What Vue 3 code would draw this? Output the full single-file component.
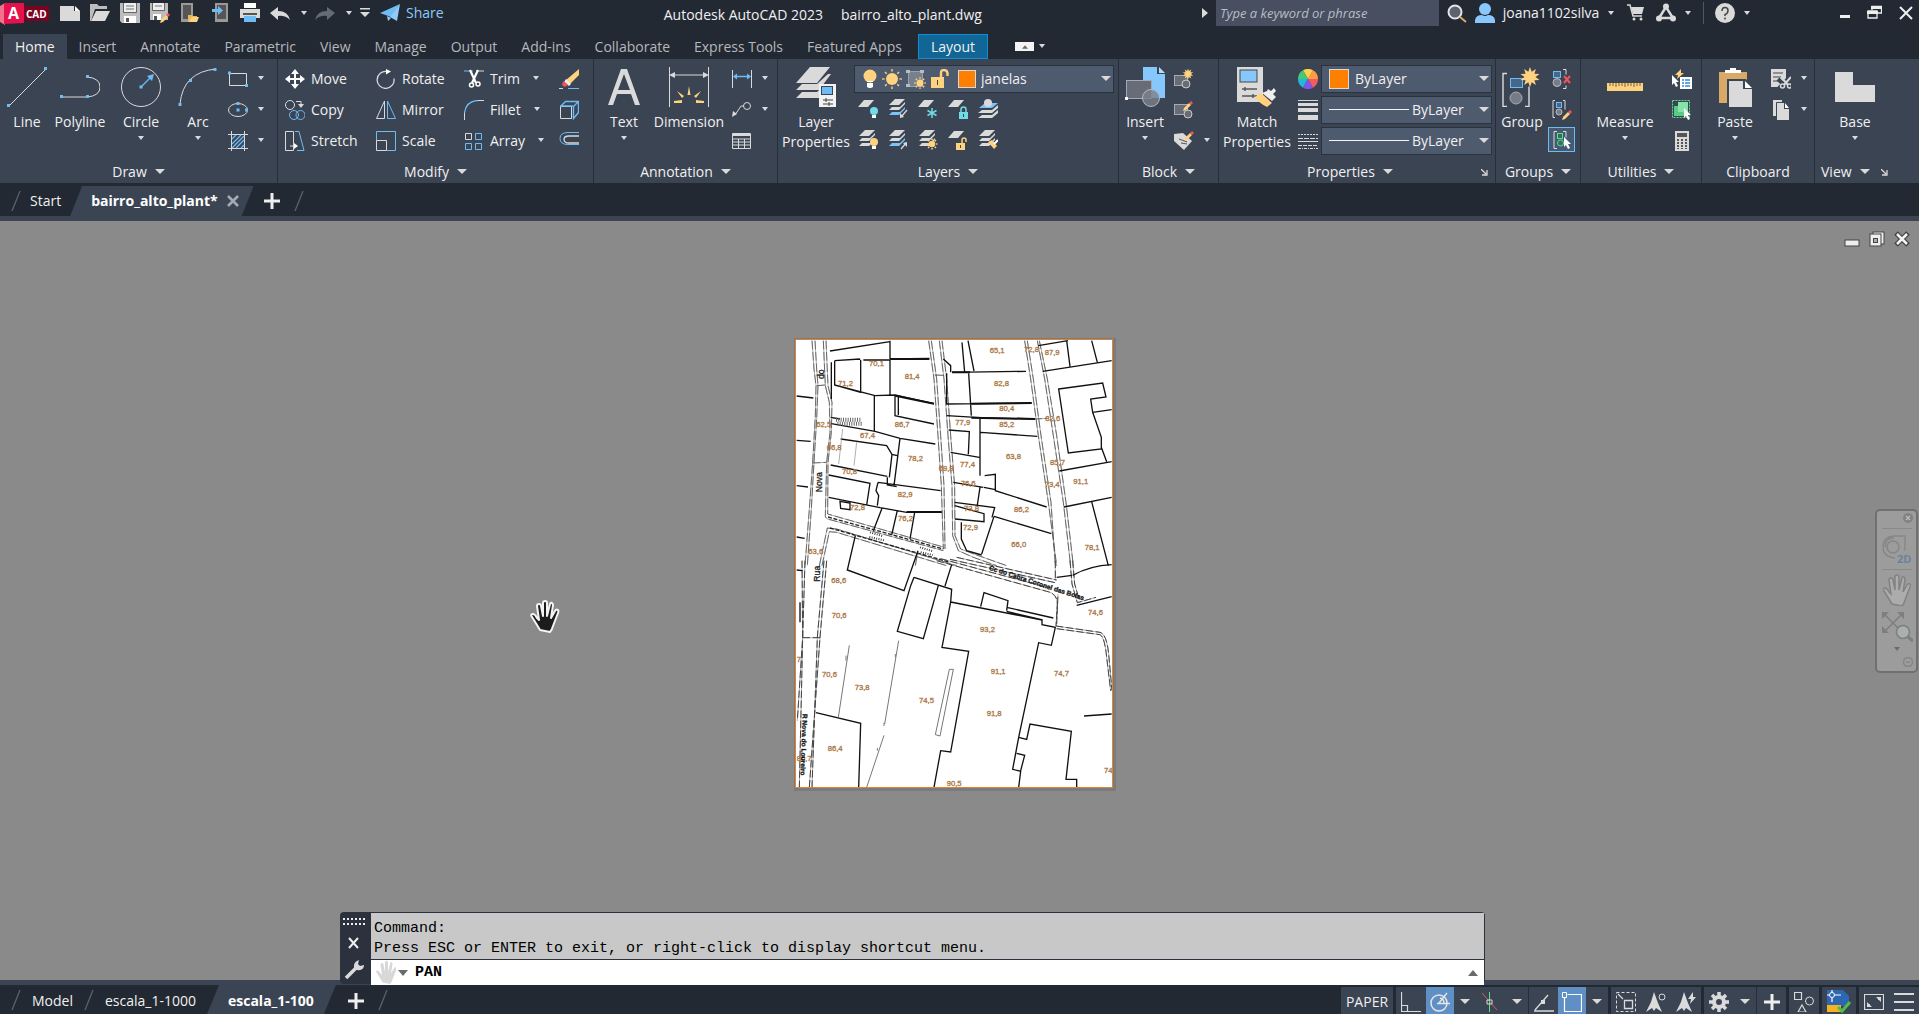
<script setup>
import { h, ref } from 'vue'

const L = '#dadada'
const B = '#6fbcf5'
const Y = '#ffd27f'
const C = '#6fdbe6'

const line = (d, c = L, w = 1) => `<path d="${d}" stroke="${c}" stroke-width="${w}" fill="none"/>`
const fill = (d, c = L) => `<path d="${d}" fill="${c}"/>`
const dot = (x, y, s = 3, c = B) => `<rect x="${x - s / 2}" y="${y - s / 2}" width="${s}" height="${s}" fill="${c}"/>`
const bulb = (x, y, c) => `<circle cx="${x}" cy="${y}" r="4" fill="${c}"/><rect x="${x - 2}" y="${y + 4}" width="4" height="3" fill="#fff"/>`
const sun = (x, y, r) => {
  let s = `<circle cx="${x}" cy="${y}" r="${r}" fill="${Y}"/>`
  for (let i = 0; i < 8; i++) {
    const a = (i * Math.PI) / 4
    const p = (k) => `${(x + Math.cos(a) * k).toFixed(1)} ${(y + Math.sin(a) * k).toFixed(1)}`
    s += line(`M${p(r * 1.25)}L${p(r * 1.65)}`, Y, r > 5 ? 1.4 : 1.6)
  }
  return s
}
const star = (x, y, r) => {
  const pts = []
  for (let i = 0; i < 20; i++) {
    const a = (i * Math.PI) / 10 - Math.PI / 2
    const k = i % 2 ? r * 0.55 : r
    pts.push(`${(x + Math.cos(a) * k).toFixed(1)},${(y + Math.sin(a) * k).toFixed(1)}`)
  }
  return `<polygon points="${pts.join(' ')}" fill="${Y}"/>`
}
const pencil = (x, y) =>
  `<g transform="translate(${x} ${y})">${fill('M0 10L1 7L6 2L8 4L3 9z', Y)}${fill('M6 2L8 0L10 2L8 4z', '#f0555a')}</g>`
const sheet = (x, y, c = L) => fill(`M${x + 6} ${y}h10l-6 7h-10z`, c)
const stack = (mid = L) =>
  fill('M7 0h10l-6 6h-10z') + fill('M1 11l3-3h8l5-5v2l-6 6z') + fill('M1 16l3-3h8l5-5v2l-6 6z', mid)
const arrowDown = line('M19 11l-5 6', L, 1.3) + fill('M12 19v-5l4 4z')
const arrowUp = line('M13 19l5-6', L, 1.3) + fill('M19 12v5l-4-4z')
const padlock = (x, y, c, open) =>
  `<rect x="${x}" y="${y}" width="9" height="7" fill="${c}"/>` +
  (open ? line(`M${x + 6} ${y}v-3q0-2 2-2t2 2v2`, c, 1.5) : line(`M${x + 2} ${y}v-2.500q0-2.500 2.500-2.500t2.500 2.500v2.500`, c, 1.5)) +
  `<rect x="${x + 4}" y="${y + 2}" width="1" height="3" fill="#3b4453"/>`
const cursor = (x, y) => `<g transform="translate(${x} ${y})">${fill('M0 0v10l2-2 2 4 2-1-2-4h3z', '#fff')}</g>`
const scissors = (x, y) =>
  `<g transform="translate(${x} ${y})">${line('M1 0l7 8M11 0l-7 8', L, 2)}<circle cx="2.500" cy="9" r="2" stroke="${L}" stroke-width="1.500" fill="none"/><circle cx="9.500" cy="9" r="2" stroke="${L}" stroke-width="1.500" fill="none"/></g>`
const HAND =
  'M9 30l-3-5-5-8q-2-3 1-3 2 0 4 4l2 2-2-14q0-2 2-2t2 2l2 10v-13q0-2 2-2t2 2v13l3-12q1-2 2-1t1 2l-2 13 4-7q1-2 3-1 1 1 0 3l-5 13q-1 4-3 6z'

const icons = {
  caret: [8, 5, fill('M1 0h6l-3 4z')],
  caretBig: [10, 6, fill('M0 0h10l-5 5z')],
  play: [6, 10, fill('M0 0l6 5-6 5z')],
  launch: [7, 7, line('M0 0l5 5M6 1v5h-5', L, 1.3)],
  logo: [50, 24, fill('M0 5l5-3v22l-5-3z', '#f2718d') + fill('M4 2h20v20l-20 1z', '#e5124d') + '<rect x="24" y="5" width="25" height="15" rx="1" fill="#7a0223"/>'],
  fileNew: [20, 20, fill('M0 3h14v5h6v10h-20z') + fill('M15 3l5 5h-5z', '#fff')],
  open: [20, 20, fill('M0 1h7l2 2h8v3h-12l-4 12h-1z', '#bdbdbd') + fill('M6 8h14l-5 10h-14z')],
  save: [20, 20, fill('M0 0h20v20h-18l-2-2z', '#bdbdbd') + fill('M4 0h12v9h-12z', '#eee') + fill('M4 13h12v7h-12z', '#fff') + fill('M6 15h3v4h-3z', '#555') + line('M6 3h8M6 6h8', '#777') + line('M3.500 0v9.500h13V0', '#666')],
  saveAs: [20, 20, fill('M0 0h18v17h-18z', '#bdbdbd') + fill('M3 0h11v7h-11z', '#eee') + fill('M3 11h8v6h-8z', '#fff') + fill('M4 13h3v4h-3z', '#555') + line('M5 3h7', '#777') + line('M2.500 0v7.500h12V0', '#666') + pencil(10, 10)],
  openMobile: [20, 20, fill('M1 0h12v19h-12z', '#999') + fill('M3 2h8v14h-8z', '#555') + fill('M8 12h4l1 1h4v2h-5l-2 4h-2z', '#eab75d') + fill('M12 14h7l-2 5h-8z', Y)],
  saveMobile: [20, 20, fill('M5 0h13v19h-13z', '#999') + fill('M7 2h9v14h-9z', '#555') + fill('M2 6h6v-3l5 4.500-5 4.500v-3h-6z', B)],
  print: [20, 20, fill('M4 0h12v5h-12z', '#fff') + fill('M0 6h20v9h-20z') + fill('M3 10h14v2h-14z', '#555') + fill('M4 13h12v6h-12z', B)],
  undo: [20, 20, fill('M0 10l8-6v4q10 0 12 9-5-5-12-4v4z')],
  redo: [20, 20, fill('M20 10l-8-6v4q-10 0-12 9 5-5 12-4v4z', '#646b75')],
  customize: [10, 10, fill('M0 0h10v1.500h-10zM0 4h10l-5 5z')],
  plane: [20, 20, fill('M0 10l20-9-9 13z', B) + fill('M20 1l-3 17-7-4zM7 13l1 5 3-3z', '#8fcbf8')],
  search: [20, 20, '<circle cx="8" cy="9" r="6.500" fill="#5b6370" stroke="#e4e4e4" stroke-width="2"/>' + line('M13 14l6 5', '#d7a963', 2)],
  user: [20, 20, '<circle cx="10" cy="6" r="6" fill="#8ac7fa"/>' + fill('M0 20v-3q1-5 7-5 3 2 6 0 6 0 7 5v3z', '#8ac7fa')],
  cart: [18, 18, line('M0 1h3l3 11h9', L, 1.5) + fill('M4 3h13l-2 7h-9z') + '<circle cx="7" cy="15" r="1.500" fill="#dadada"/><circle cx="14" cy="15" r="1.500" fill="#dadada"/>'],
  adsk: [20, 20, line('M10 4L3 15h14z', L, 2.5) + '<circle cx="10" cy="3.500" r="3" fill="#dadada"/><circle cx="3" cy="15.500" r="3" fill="#dadada"/><circle cx="17" cy="15.500" r="3" fill="#dadada"/>'],
  help: [20, 20, '<circle cx="10" cy="10" r="10" fill="#dadada"/>' + line('M7 8q0-3.500 3-3.500t3 3-3 4v1.500M10 14.500v2', '#444', 1.5)],
  winMin: [10, 16, fill('M0 10h10v3h-10z', '#eee')],
  winRestore: [15, 16, line('M5 5v-3.500h9.500v6.500h-4M1 6h9v7h-9z', '#eee', 1.3) + fill('M4 1h11v3h-11zM0 6h11v3h-11z', '#eee')],
  winClose: [14, 14, line('M1 1l12 12M13 1L1 13', '#eee', 2)],

  line: [40, 40, line('M2 39L39 2') + dot(1.5, 38.5) + dot(38.5, 1.5)],
  polyline: [40, 40, line('M1 30h26q13-1 13-10t-13-10') + dot(1.5, 29.5) + dot(27.5, 29.5) + dot(27.5, 9.5)],
  circle: [40, 40, '<circle cx="20" cy="20" r="19.500" fill="none" stroke="#dadada"/>' + line('M20 20l10-10', B, 1.3) + fill('M33 7l-2 7-5-5z', B) + dot(20, 20)],
  arc: [40, 40, line('M2 37Q5 5 38 2') + dot(2, 37.5) + dot(12.5, 13.5) + dot(37, 2.5)],
  rect: [20, 20, line('M1.500 4.500h17v12h-17z') + dot(1.5, 4) + dot(18.5, 16.5)],
  ellipse: [20, 20, '<ellipse cx="10" cy="10" rx="9.500" ry="6.500" fill="none" stroke="#dadada"/>' + dot(10, 3.5) + dot(10, 10) + dot(18.5, 10)],
  hatch: [20, 20, line('M3.500 0v20M16.500 0v20M0 3.500h20M0 17.500h20') + line('M4 8l4-4M4 13l9-9M4 17L16 5M8 17l8-8M13 17l3-3', B, 1.3)],
  move: [20, 20, fill('M10 0l4 5h-3v4h4v-3l5 4-5 4v-3h-4v4h3l-4 5-4-5h3v-4h-4v3l-5-4 5-4v3h4v-4h-3z', '#fff')],
  copy: [20, 20, '<circle cx="5" cy="5" r="4.500" fill="none" stroke="#dadada"/><circle cx="9" cy="15" r="4.500" fill="none" stroke="#6fbcf5"/><circle cx="15.500" cy="15" r="4.500" fill="none" stroke="#6fbcf5"/>' + line('M11 1.500h5v3') + fill('M13 4h6l-3 4z')],
  stretch: [20, 20, line('M.5.500h8v19h-8zM5 15h5') + fill('M9 12l4 3-4 3z', '#fff') + line('M10 .5h4l5 19h-7', B)],
  rotate: [20, 20, line('M11 2.500a8.500 8.500 0 1 0 7 7', L, 1.3) + fill('M10 0l5 2.500-5 3z', '#fff')],
  mirror: [20, 20, line('M8.500 1v17.500h-8z') + line('M11.500 1v17.500h8z', B)],
  scale: [20, 20, line('M.5 10V.500h19v19h-9', B) + line('M.5 9.500h10v10h-10z')],
  trim: [20, 20, line('M0 2h9', B) + line('M12 2h8') + line('M6 1l6 13M14 1L8 14', '#fff', 2.2) + '<circle cx="7.500" cy="16" r="2" fill="none" stroke="#fff" stroke-width="1.500"/><circle cx="14" cy="15" r="2" fill="none" stroke="#fff" stroke-width="1.500"/>'],
  fillet: [20, 20, line('M.5 20v-7') + line('M.5 13Q2 1 14 .5', B, 1.3) + line('M14 .5h6')],
  array: [20, 20, line('M1.500 2.500h6v6h-6z') + line('M11.500 2.500h6v6h-6zM1.500 12.500h6v6h-6zM11.500 12.500h6v6h-6z', B)],
  erase: [20, 20, fill('M20 0v6l-9 9-4-4z', Y) + fill('M7 10l5 5-2 2-5-4z', '#eee') + fill('M5 12l4 4q-3 3-5 1t1-5z', '#f0555a') + line('M0 19.500h4') + line('M9 19.500h11', B)],
  explode: [20, 20, line('M1.500 6.500h11v12h-11z') + line('M1.500 6.500l5-5h13l-5 5v12l5-6v-11M1 6h13', B, 1.4)],
  offset: [20, 20, line('M20 1.500h-11q-8 0-8 6t8 6h11', B) + line('M20 5h-10q-5 0-5 3.500t5 3.500h10', L, 1.3)],
  text: [40, 40, fill('M4 38L17 2h6l13 36h-5l-4-11H13L9 38zM14 23h12L20 7z')],
  dimension: [40, 40, line('M.5 0v40M39.500 0v40M2 8h36') + fill('M0 8l6-3v6zM40 8l-6-3v6z') + fill('M18.500 28l1.500-9 1.500 9zM8 24l5 7 2-2zM32 24l-5 7-2-2zM5 34l8-1v3h-8zM35 34l-8-1v3h8z', Y)],
  linear: [20, 20, line('M.5 1v18M19.500 1v18') + line('M2 7.500h16', B, 1.5) + fill('M1 7.500l4-3v6zM19 7.500l-4-3v6z', B)],
  leader: [20, 20, line('M3 15l6-9h3') + '<circle cx="15" cy="6" r="3.500" fill="none" stroke="#dadada"/>' + fill('M0 17l1-6 4 3z')],
  table: [20, 20, line('M.5 2.500h18v15h-18zM.5 8h18M.5 11h18M.5 14h18M6.500 8v10M12.500 8v10') + fill('M1 3h18v2h-18z')],
  layerProps: [40, 40, fill('M14 0h20l-13 16h-21z') + fill('M0 23l6-6h15l11-10h3l-12 16z') + fill('M0 31l6-6h15l9-8h3v14z') + '<rect x="23" y="17" width="17" height="23" fill="#f2f2f2"/><rect x="25.500" y="19.500" width="11" height="8" fill="#6fbcf5" stroke="#3b4453"/>' + line('M27 33h10M27 37h10M30 31v4M33 35v4', '#444')],
  bulb: [16, 20, '<circle cx="8" cy="7" r="6.500" fill="#ffd27f"/>' + fill('M5 12h6v1h-6zM5 14h6v4l-2 1h-2l-2-1z', '#fff')],
  sun: [20, 20, sun(10, 10, 6)],
  frameSun: [20, 20, line('M2.500 2.500h14v15h-14z', '#9a9fa8', 1) + fill('M3 3h13v14h-13z', '#78808e') + fill('M0 1h4v3h-4zM14 1h4v3h-4zM0 15h4v3h-4z', '#b8bcc2') + sun(14, 14, 3.5)],
  unlock: [20, 20, '<rect x="1" y="8" width="13" height="11" fill="#ffd27f"/>' + line('M11 8V4q0-3 3-3t3.500 3v3', Y, 2.4) + fill('M7 11h1v5h-1z', '#444')],
  l1: [20, 20, sheet(0, 1) + bulb(16, 12, C)],
  l2: [20, 20, stack('#7cc3fa') + arrowDown],
  l3: [20, 20, sheet(0, 1) + line('M14 9v10M9.500 11.500l9 5M18.500 11.500l-9 5', C, 1.5)],
  l4: [20, 20, sheet(0, 1) + padlock(11, 13, C)],
  l5: [20, 20, fill('M1 9l6-5h13l-6 5z', '#7cc3fa') + '<circle cx="10" cy="4" r="4" fill="#dadada"/>' + fill('M0 14l4-3h10l6-5v3l-6 5zM0 19l4-3h10l6-5v3l-6 5z')],
  l6: [20, 20, stack() + bulb(16, 12, Y)],
  l7: [20, 20, stack('#7cc3fa') + arrowUp],
  l8: [20, 20, stack() + sun(14, 14, 3.3)],
  l9: [20, 20, sheet(0, 1) + padlock(8, 13, Y, true)],
  l10: [20, 20, stack() + fill('M10 12l4-2 5 6-3 3z', Y) + line('M16 14l4-4', '#fff', 2)],
  insert: [40, 40, fill('M18 0h14v7h8v24h-22z', '#86c8fb') + fill('M34 0l6 6h-6z', '#b5defe') + '<rect x="1.500" y="13.500" width="25" height="18" fill="#666d79" stroke="#a5a9b0"/><circle cx="26" cy="31" r="8.500" fill="#7b818b" fill-opacity=".8" stroke="#b5b8bd"/>' + dot(1.5, 31.5, 3, '#fff')],
  blkNew: [20, 20, '<rect x=".5" y="6.500" width="13" height="10" fill="#666d79" stroke="#aaa"/><circle cx="12" cy="15" r="4" fill="#666d79" stroke="#ccc"/>' + star(14, 5, 5.5)],
  blkEdit: [20, 20, '<rect x=".5" y="4.500" width="13" height="10" fill="#666d79" stroke="#aaa"/><circle cx="14" cy="14" r="4" fill="#666d79" stroke="#ccc"/>' + pencil(9, 1)],
  tag: [20, 20, fill('M0 3l9-1 9 8-8 9-10-9z') + pencil(10, 0) + line('M5 8l8 3M7 12l6 1', '#555')],
  match: [40, 40, '<rect x="0" y="0" width="26" height="35" fill="#dadada"/><rect x="3" y="3" width="17" height="12" fill="#86c8fb" stroke="#444"/>' + line('M5 22h15M5 29h15M8 20v4M16 27v4', '#555', 1.4) + fill('M18 30l6-4 11 10-5 4q-7-3-12-10z', Y) + fill('M25 26l5-2 1-2 3 2 3-3 2 3-3 3 3 3-4 4z', '#eee')],
  wheel: [20, 20, ['#ff9b45', '#ffd04e', '#47c973', '#22b8d8', '#7f55ea', '#f35b61'].map((c, i) => {
    const p = (k) => `${(10 + 10 * Math.cos(k)).toFixed(1)} ${(10 + 10 * Math.sin(k)).toFixed(1)}`
    const a = (-i * Math.PI) / 3
    return fill(`M10 10L${p(a)}A10 10 0 0 0 ${p(a - Math.PI / 3)}z`, c)
  }).join('')],
  weights: [20, 20, fill('M0 0h20v1h-20zM0 3h20v3h-20zM0 8h20v4h-20zM0 15h20v5h-20z')],
  types: [20, 20, `<g stroke="#dadada"><path d="M0 3.500h20" stroke-dasharray="2 1"/><path d="M0 7.500h20" stroke-dasharray="5 1"/><path d="M0 10.500h20"/><path d="M0 14.500h20" stroke-dasharray="4 1"/><path d="M0 17.500h20" stroke-dasharray="3 1 1 1"/></g>`],
  group: [40, 40, line('M5 6.500h-4v33h4M23 39.500h4v-20', '#dadada', 1.4) + '<rect x="8.500" y="11.500" width="12" height="9" fill="#47678a" stroke="#6fbcf5"/><circle cx="14" cy="31" r="6" fill="#777d88" stroke="#aaa"/>' + star(28, 10, 10)],
  ungroup: [20, 20, '<rect x="1.500" y="2.500" width="7" height="6" fill="#47678a" stroke="#6fbcf5"/><circle cx="5" cy="13.500" r="4" fill="#777d88" stroke="#bbb"/>' + line('M11 .5h3v5M11 19.500h3v-3') + line('M12 7l6 7M18 7l-6 7', '#f0555a', 2)],
  groupEdit: [20, 20, line('M3 .5h-2v17h2M11 .5h2v9') + '<rect x="4.500" y="2.500" width="5" height="5" fill="#47678a" stroke="#6fbcf5"/><circle cx="7" cy="12" r="3" fill="#777d88" stroke="#bbb"/>' + pencil(10, 10)],
  groupSel: [20, 20, line('M5 1.500h-3v17h3M11 1.500h3v6') + '<rect x="5.500" y="3.500" width="5" height="5" fill="#37705a" stroke="#5ddd8d"/><circle cx="8.500" cy="13" r="3" fill="#37705a" stroke="#5ddd8d"/>' + cursor(12, 7)],
  measure: [40, 40, fill('M2 16h36v8h-36z', Y) + line('M5 16v3M8 16v3M11 16v4M14 16v3M17 16v3M20 16v4M23 16v3M26 16v3M29 16v4M32 16v3M35 16v3', '#7b6230')],
  quick: [20, 20, fill('M9 0l-6 6h3l-1 4 7-6h-3z', Y) + cursor(0, 6) + '<rect x="8" y="8" width="12" height="12" fill="#fff"/>' + line('M10 11h2M13 11h5M10 14h2M13 14h5M10 17h2M13 17h5', '#3388d8', 1.3)],
  selAll: [20, 20, '<rect x=".5" y=".5" width="17" height="17" fill="none" stroke="#5ddd8d" stroke-dasharray="2 1"/>' + fill('M2 6h10v10h-10z', '#5cc986') + fill('M6 2h10v10h-10z', '#86e3a8') + cursor(12, 8)],
  calc: [20, 20, '<rect x="3" y="0" width="14" height="20" fill="#dadada"/><rect x="5" y="2" width="10" height="4" fill="#555"/>' + '<path d="M6 8v10M10 8v10M14 8v10" stroke="#555" stroke-width="2" stroke-dasharray="2 1"/>'],
  paste: [40, 40, fill('M4 5h28v31h-28z', '#d9a968') + fill('M10 6v-3h5v-2h6v2h5v3z', '#fff') + fill('M12 12h19l6 9v20h-25z', '#3b4453') + fill('M14 14h14v8h9v18h-23z') + fill('M30 14l7 7h-7z', '#fff')],
  cut: [20, 20, fill('M0 0h15v18h-15z') + line('M2 4h10M2 8h8M2 12h6', '#444', 1.2) + '<path d="M7 10l10 10M19 8l-11 11" stroke="#3b4453" stroke-width="4"/>' + scissors(9, 8)],
  copyClip: [20, 20, fill('M2 0h9v3h-5v13h-4z') + line('M5.500 16v-13.500h7', '#3b4453', 1) + fill('M6 3h7v6h5v11h-12z') + fill('M14 3l4 5h-4z', '#fff')],
  base: [40, 40, fill('M0 5h18v13h22v17h-40z')],
  close: [12, 12, line('M1 1l10 10M11 1L1 11', '#a6abb3', 2.6)],
  closeW: [12, 12, line('M1 1l9 10M10 1L1 11', '#eee', 2)],
  plus: [16, 16, line('M8 0v16M0 8h16', '#eee', 3)],
  slash: [10, 20, line('M9 0L1 20', '#596270', 1.3)],
  grip: [22, 8, '<path d="M0 1h22M0 6h22" stroke="#eee" stroke-width="2" stroke-dasharray="2 2"/>'],
  wrench: [20, 20, line('M2 18L12 8', '#dadada', 3.5) + fill('M10 8q-1-6 5-8l-1 4 2 2 4-1q0 6-7 5z')],
  handCursor: [28, 32, `<path d="${HAND}" fill="#1c1c1c" stroke="#f4f4f4" stroke-width="2" stroke-linejoin="round"/>`],
  hand: [20, 26, `<g transform="scale(.75)">${fill(HAND, '#d8d8d8')}</g>`],
  up: [10, 6, fill('M0 6l5-6 5 6z', '#6a6a6a')],
  down: [10, 6, fill('M0 0h10l-5 6z', '#6a6a6a')],
  ortho: [20, 20, line('M.5 0v19.500h20M.5 13.500h6v6', L, 1.2)],
  polar: [20, 20, '<circle cx="9" cy="11" r="8" fill="none" stroke="#e6e6e6" stroke-width="1.500"/>' + line('M7 11.500h13M9 11L17 1M10 6q4 1 4 5', '#e6e6e6', 1.4)],
  iso: [20, 20, line('M1 1l15 17', '#e0585c') + line('M8.500 0v20', '#5ddd8d') + line('M6 8h5v4h-5z')],
  track: [20, 20, line('M0 19h20M1 18L14 3', L, 1.3) + dot(9, 10, 4, L)],
  osnap: [20, 20, line('M2.500 5v14.500h17V2.500h-14', '#fff', 1.2) + line('M.5.500h4v5h-4z', '#fff')],
  annoFrame: [20, 20, '<rect x=".5" y=".5" width="19" height="19" fill="none" stroke="#dadada" stroke-dasharray="3 2"/>' + line('M8.500 8.500h8v8h-8zM2 2l5 5', L, 1.3)],
  anno1: [20, 20, fill('M8 0l4 11 4 9-6-4-2 3-2-3-6 4 5-10z') + '<circle cx="16" cy="5" r="3" fill="none" stroke="#dadada"/>'],
  anno2: [20, 20, fill('M8 0l4 11 4 9-6-4-2 3-2-3-6 4 5-10z') + fill('M17 0l-5 7h3l-1 5 6-7h-3z')],
  gear: [20, 20, '<circle cx="10" cy="10" r="5" fill="none" stroke="#dadada" stroke-width="4"/>' + line('M10 0v4M10 16v4M0 10h4M16 10h4M3 3l3 3M14 14l3 3M17 3l-3 3M3 17l3-3', L, 3.5)],
  isolate: [20, 20, line('M.5.500h7v7h-7zM4 20l4-7 4 7z', L, 1.2) + '<circle cx="15.500" cy="9" r="4" fill="none" stroke="#dadada"/>'],
  acad: [24, 24, fill('M0 0h16l6 6v10h-22z', '#2d67b2') + fill('M0 15h14v7h-14z', '#f5b323') + line('M5 0v12M0 5h14', '#fff', 1.2) + '<circle cx="5" cy="5" r="2.500" fill="#2d67b2" stroke="#fff"/>' + line('M11 17l4 4 8-9', '#54b948', 3)],
  screen: [20, 16, line('M.5.500h19v15h-19z', L, 1.2) + fill('M17 3v5l-5-5zM3 13v-5l5 5z') + line('M14 6l2-2M4 12l2-2')],
  menu: [20, 18, fill('M0 0h20v2h-20zM0 8h20v2h-20zM0 16h20v2h-20z')],
  mdiMin: [16, 16, '<rect x="1" y="9" width="14" height="6" fill="#eee" stroke="#444"/>'],
  mdiRestore: [16, 16, '<rect x="4" y="1" width="11" height="12" fill="#eee" stroke="#444"/><rect x="1" y="3" width="11" height="12" fill="#eee" stroke="#444"/><rect x="4.500" y="7.500" width="4" height="4" fill="#aaa" stroke="#444"/>'],
  mdiClose: [16, 16, line('M2 2l12 12M14 2L2 14', '#444', 5) + line('M3 3l10 10M13 3L3 13', '#f4f4f4', 2.5)],
  navX: [10, 10, '<circle cx="5" cy="5" r="5" fill="#828282"/>' + line('M3 3l4 4M7 3l-4 4', '#bbb', 1.3)],
  navM: [10, 10, '<circle cx="5" cy="5" r="4.500" fill="none" stroke="#858585" stroke-width="1.500"/>' + line('M3 5h4', '#858585', 1.3)],
  navWheel: [30, 30, line('M13 23q-12-1-12-11T12 1h11v11q0 2-1 4M3 12q0-9 9-9', '#868686', 1.3) + '<circle cx="11" cy="12" r="6" fill="none" stroke="#868686" stroke-width="1.500"/>'],
  navHand: [28, 32, `<path d="${HAND}" fill="#acacac" stroke="#828282" stroke-width="1.500"/>`],
  navZoom: [32, 32, line('M3 3l18 18M21 3L3 21', '#7e7e7e', 1.5) + fill('M1 1h7l-7 7zM23 1h-7l7 7zM1 22v-7l7 7z', '#7e7e7e') + '<circle cx="22" cy="21" r="6.500" fill="#a9b0b0" stroke="#7e7e7e" stroke-width="1.500"/>' + line('M27 26l5 4', '#7e7e7e', 3)],
}

const Icon = (p) =>
  h('svg', { width: icons[p.n][0], height: icons[p.n][1], viewBox: `0 0 ${icons[p.n][0]} ${icons[p.n][1]}`, innerHTML: icons[p.n][2], 'aria-hidden': 'true' })
Icon.props = ['n']

const quickAccess = ['fileNew', 'open', 'save', 'saveAs', 'openMobile', 'saveMobile', 'print', 'undo', 'caret', 'redo', 'caret', 'customize']
const tabs = ['Home', 'Insert', 'Annotate', 'Parametric', 'View', 'Manage', 'Output', 'Add-ins', 'Collaborate', 'Express Tools', 'Featured Apps', 'Layout']
const modify = [
  [['move', 'Move'], ['copy', 'Copy'], ['stretch', 'Stretch']],
  [['rotate', 'Rotate'], ['mirror', 'Mirror'], ['scale', 'Scale']],
  [['trim', 'Trim', 1], ['fillet', 'Fillet', 1], ['array', 'Array', 1]],
]
const layerTools = ['l1', 'l2', 'l3', 'l4', 'l5', 'l6', 'l7', 'l8', 'l9', 'l10']
const layer = ref('janelas')
const color = ref('ByLayer')
const keyword = ref('')
const command = ref('PAN')

const walls = [
  'M120 46L300 18M300 15V70M134 75L210 70M134 75V148L212 170V72M220 73H300V180M300 70L418 68M134 148L255 180L315 178L432 204M124 80V190M253 180V285M315 180V240L432 265M325 184V238M122 245L150 250M124 264L255 287L330 308L436 325M330 308L312 450M152 310L290 330L306 356L322 360M306 356L298 425M122 388L292 422M292 425V448L320 453M116 418L240 443L230 508M116 485L270 516L350 530H455M264 440L258 465L266 480L262 510M264 440L452 465M150 497L180 502V522L152 518ZM276 518L250 585M322 524L305 598M374 530L360 610',
  'M20 181L70 187M20 314L62 317M20 450L54 454M20 604L44 608',
  'M460 70L482 90V110M486 110L708 107M470 113V205L725 202M536 113L544 240M516 20L524 110M534 15L552 106M470 240L570 246L735 250M476 283L538 288L535 356M570 250V420M572 290L742 302M482 350L568 365M490 440L580 455M584 420L616 416V465L770 514M570 455L562 508M494 500L614 516L606 545M494 510L582 534V558L495 550M612 542L784 594M612 542L575 655M514 560V610L530 645L575 658M582 455L616 462',
  'M745 30L834 15M830 15L840 92M758 107L965 75M905 15L922 80M806 160L938 142L948 184L902 190L908 230L934 305V340L835 352ZM908 230L965 222M934 335L950 378M808 406L965 378M822 514L965 485M905 498L955 690',
]
const roads = [
  'M66 15L72 100L78 150L76 240L68 380L58 520L45 690M75 15L80 100L84 150L80 250L72 380L64 520L52 690M100 15L106 150L118 200L120 290L110 380L106 540Q106 550 120 552L460 645M108 15L114 150L126 200L124 290L114 380L113 535L460 634M80 150L106 148M66 382L110 380',
  'M416 15L432 130L444 300L454 450L460 640M424 15L440 130L452 300L462 450L465 640M448 15L462 130L474 300L486 450L488 600L505 645L550 665L620 690M456 15L470 130L482 300L494 450L495 600L512 640L560 658L650 690M434 118L460 119',
  'M704 15L722 130L745 300L775 500L800 690M712 15L730 130L753 300L783 500L796 690M742 15L764 130L790 300L820 500L842 690M748 15L772 130L800 300L828 500L850 690M730 250L775 248M88 690L112 577L140 580L500 690M96 690L118 588L140 590L470 690M376 690L382 655',
]
const walls2 = [
  'M196 -75L172 28L342 90L384 -30M372 50L362 75L322 212L400 234L445 74M372 50L485 86L482 124L456 260L536 272L482 574L452 570L432 680M485 12L465 76M482 124L756 178V192L796 200L784 254L746 246L686 530L668 626L692 632L686 680M572 138L582 96L654 120L650 150M650 140L790 172M650 152L758 178M78 456L212 488L206 680M686 530L710 536L720 490L844 512L828 656H860V680M680 578L704 584L692 630M882 466L965 460M965 12Q900 15 848 44M800 50L846 44M860 134L965 108',
  'M20 28L38 30M30 125V185',
]
const roads2 = [
  'M36 0L38 230L22 480M45 0L38 230L28 680M110 0L90 230L58 680M102 0L82 230L66 680M38 231H92',
  'M440 0L770 92Q802 98 802 130L798 196M452 -6L770 80M480 -4L796 66M500 -10L800 58M840 0L846 70L862 126L918 110M848 0L854 70L868 118M798 196L930 215Q950 220 956 280L966 390M800 204L930 222Q944 228 950 290L962 390M800 190L804 100M796 0V60',
]
const fences = ['M178 254L145 470M326 240L284 490M282 524L230 680M478 326H490L450 526L436 522Z', 'M168 285V300M316 280V290M282 486V496M262 562V570']
const spots = [
  [599, 52, '65,1'], [702, 48, '72,8'], [764, 57, '87,9'], [237, 92, '70,1'], [344, 130, '81,4'], [144, 151, '71,2'], [612, 151, '82,8'],
  [628, 226, '80,4'], [766, 256, '82,6'], [79, 273, '62,5'], [314, 274, '86,7'], [496, 267, '77,9'], [628, 275, '85,2'], [210, 307, '67,4'],
  [110, 344, '66,8'], [354, 375, '78,2'], [648, 369, '63,8'], [780, 388, '85,7'], [446, 405, '69,8'], [510, 394, '77,4'], [156, 416, '70,8'],
  [512, 450, '76,6'], [764, 453, '73,4'], [850, 446, '91,1'], [323, 485, '82,9'], [180, 522, '72,8'], [522, 525, '73,8'], [672, 530, '86,2'],
  [324, 556, '76,2'], [519, 584, '72,9'], [664, 634, '66,0'], [884, 643, '78,1'], [55, 656, '63,6'], [124, 741, '68,6'], [125, 848, '70,6'],
  [894, 838, '74,6'], [570, 890, '93,2'], [96, 1023, '70,6'], [194, 1063, '73,8'], [387, 1103, '74,5'], [602, 1014, '91,1'], [792, 1021, '74,7'],
  [590, 1140, '91,8'], [113, 1247, '86,4'], [942, 1313, '74'], [470, 1350, '90,5'], [20, 979, '7'], [20, 1275, '80,7'],
]
</script>

<template>
  <div class="app">
    <header class="titlebar">
      <div class="quick">
        <span class="brand"><Icon n="logo" /><b class="brand-a">A</b><b class="brand-cad">CAD</b></span>
        <button v-for="(q, i) in quickAccess" :key="i" :class="{ narrow: q === 'caret' }" type="button"><Icon :n="q" /></button>
        <button type="button" class="share"><Icon n="plane" />Share</button>
      </div>
      <h1 class="title"><span>Autodesk AutoCAD 2023</span><span>bairro_alto_plant.dwg</span></h1>
      <div class="account">
        <button type="button"><Icon n="play" /></button>
        <input v-model="keyword" class="keyword" type="text" placeholder="Type a keyword or phrase" aria-label="Search" />
        <button type="button"><Icon n="search" /></button>
        <button type="button" class="user"><Icon n="user" /><span>joana1102silva</span><Icon n="caret" /></button>
        <button type="button" class="cart"><Icon n="cart" /></button>
        <button type="button" class="drop"><Icon n="adsk" /><Icon n="caret" /></button>
        <i class="rule"></i>
        <button type="button" class="drop"><Icon n="help" /><Icon n="caret" /></button>
      </div>
      <div class="window">
        <button type="button"><Icon n="winMin" /></button>
        <button type="button"><Icon n="winRestore" /></button>
        <button type="button"><Icon n="winClose" /></button>
      </div>
    </header>

    <nav class="tabs">
      <button v-for="t in tabs" :key="t" type="button" :class="{ home: t === 'Home', layout: t === 'Layout' }">{{ t }}</button>
      <button type="button" class="collapse"><span class="chip"><Icon n="up" /></span><Icon n="caret" /></button>
    </nav>

    <section class="ribbon">
      <div class="panel">
        <div class="tools">
          <button class="big w54" type="button"><Icon n="line" /><span>Line</span></button>
          <button class="big w52" type="button"><Icon n="polyline" /><span>Polyline</span></button>
          <button class="big w70" type="button"><Icon n="circle" /><span>Circle</span><Icon n="caret" /></button>
          <button class="big w44" type="button"><Icon n="arc" /><span>Arc</span><Icon n="caret" /></button>
          <div class="col">
            <button v-for="n in ['rect', 'ellipse', 'hatch']" :key="n" type="button" class="small"><Icon :n="n" /><Icon n="caret" /></button>
          </div>
        </div>
        <footer>Draw<Icon n="caretBig" /></footer>
      </div>

      <div class="panel">
        <div class="tools modify">
          <div v-for="(c, i) in modify" :key="i" class="col">
            <button v-for="m in c" :key="m[0]" type="button" class="small"><Icon :n="m[0]" /><span>{{ m[1] }}</span><Icon v-if="m[2]" n="caret" /></button>
          </div>
          <div class="col">
            <button v-for="n in ['erase', 'explode', 'offset']" :key="n" type="button" class="small"><Icon :n="n" /></button>
          </div>
        </div>
        <footer>Modify<Icon n="caretBig" /></footer>
      </div>

      <div class="panel">
        <div class="tools">
          <button class="big w60" type="button"><Icon n="text" /><span>Text</span><Icon n="caret" /></button>
          <button class="big w70" type="button"><Icon n="dimension" /><span>Dimension</span></button>
          <div class="col">
            <button v-for="n in ['linear', 'leader', 'table']" :key="n" type="button" class="small"><Icon :n="n" /><Icon v-if="n !== 'table'" n="caret" /></button>
          </div>
        </div>
        <footer>Annotation<Icon n="caretBig" /></footer>
      </div>

      <div class="panel">
        <div class="tools">
          <button class="big w76" type="button"><Icon n="layerProps" /><span>Layer<br />Properties</span></button>
          <div class="layers">
            <div class="combo">
              <Icon n="bulb" /><Icon n="sun" /><Icon n="frameSun" /><Icon n="unlock" /><i class="swatch"></i>
              <select v-model="layer" aria-label="Layer"><option>janelas</option></select>
              <Icon n="caretBig" />
            </div>
            <div class="grid">
              <button v-for="n in layerTools" :key="n" type="button"><Icon :n="n" /></button>
            </div>
          </div>
        </div>
        <footer>Layers<Icon n="caretBig" /></footer>
      </div>

      <div class="panel">
        <div class="tools">
          <button class="big w52" type="button"><Icon n="insert" /><span>Insert</span><Icon n="caret" /></button>
          <div class="col close">
            <button v-for="n in ['blkNew', 'blkEdit', 'tag']" :key="n" type="button" class="small"><Icon :n="n" /><Icon v-if="n === 'tag'" n="caret" /></button>
          </div>
        </div>
        <footer>Block<Icon n="caretBig" /></footer>
      </div>

      <div class="panel">
        <div class="tools">
          <button class="big w76" type="button"><Icon n="match" /><span>Match<br />Properties</span></button>
          <div class="props">
            <Icon n="wheel" />
            <div class="combo"><i class="swatch"></i><select v-model="color" aria-label="Object color"><option>ByLayer</option></select><Icon n="caretBig" /></div>
            <Icon n="weights" />
            <div class="combo"><i class="sample"></i><select aria-label="Lineweight"><option>ByLayer</option></select><Icon n="caretBig" /></div>
            <Icon n="types" />
            <div class="combo"><i class="sample"></i><select aria-label="Linetype"><option>ByLayer</option></select><Icon n="caretBig" /></div>
          </div>
        </div>
        <footer class="launched"><span></span><span>Properties<Icon n="caretBig" /></span><Icon n="launch" /></footer>
      </div>

      <div class="panel">
        <div class="tools">
          <button class="big w52" type="button"><Icon n="group" /><span>Group</span></button>
          <div class="col tight">
            <button type="button" class="small"><Icon n="ungroup" /></button>
            <button type="button" class="small"><Icon n="groupEdit" /></button>
            <button type="button" class="small on"><Icon n="groupSel" /></button>
          </div>
        </div>
        <footer>Groups<Icon n="caretBig" /></footer>
      </div>

      <div class="panel">
        <div class="tools">
          <button class="big w88" type="button"><Icon n="measure" /><span>Measure</span><Icon n="caret" /></button>
          <div class="col close">
            <button v-for="n in ['quick', 'selAll', 'calc']" :key="n" type="button" class="small"><Icon :n="n" /></button>
          </div>
        </div>
        <footer>Utilities<Icon n="caretBig" /></footer>
      </div>

      <div class="panel">
        <div class="tools">
          <button class="big w66" type="button"><Icon n="paste" /><span>Paste</span><Icon n="caret" /></button>
          <div class="col close">
            <button v-for="n in ['cut', 'copyClip']" :key="n" type="button" class="small"><Icon :n="n" /><Icon n="caret" /></button>
          </div>
        </div>
        <footer>Clipboard</footer>
      </div>

      <div class="panel last">
        <div class="tools">
          <button class="big w80" type="button"><Icon n="base" /><span>Base</span><Icon n="caret" /></button>
        </div>
        <footer class="view">View<Icon n="caretBig" /><Icon n="launch" /></footer>
      </div>
    </section>

    <nav class="sheets files">
      <Icon n="slash" />
      <button type="button">Start</button>
      <span class="active">
        <button type="button">bairro_alto_plant*</button>
        <button type="button" aria-label="Close"><Icon n="close" /></button>
      </span>
      <button type="button" class="add" aria-label="New tab"><Icon n="plus" /></button>
      <Icon n="slash" />
    </nav>

    <main class="canvas">
      <svg class="plan" width="316" height="447" viewBox="18 13 948 1341">
        <g fill="none">
          <g stroke="#8a8a8a" stroke-width="2">
            <path v-for="d in roads" :key="d" :d="d" />
            <path v-for="d in roads" :key="d + 'd'" :d="d" stroke="#444" stroke-width="2" stroke-dasharray="26 8" />
          </g>
          <g stroke="#111" stroke-width="4"><path v-for="d in walls" :key="d" :d="d" /></g>
          <path d="M138 252h76M142 264h74" stroke="#666" stroke-width="12" stroke-dasharray="3 4" />
          <path d="M300 70H418M544 246L735 250M350 529H455M544 204L725 202M316 180L432 204M486 110H540" stroke="#111" stroke-width="6" />
          <path d="M158 280L146 385M200 320L192 390" stroke="#888" stroke-width="2" />
          <path d="M240 590l40 12M238 604l44 10M390 635l40 12M392 650l36 8" stroke="#444" stroke-width="6" stroke-dasharray="3 4" />
          <path d="M114 544L460 640M120 577L480 680" stroke="#222" stroke-width="4" stroke-dasharray="12 5" />
          <g transform="translate(0 675)">
            <g stroke="#8a8a8a" stroke-width="2">
              <path v-for="d in roads2" :key="d" :d="d" />
              <path v-for="d in roads2" :key="d + 'd'" :d="d" stroke="#444" stroke-width="3" stroke-dasharray="22 8" />
            </g>
            <g stroke="#111" stroke-width="4"><path v-for="d in walls2" :key="d" :d="d" /></g>
            <g stroke="#777" stroke-width="3"><path v-for="d in fences" :key="d" :d="d" /></g>
          </g>
        </g>
        <g class="spot"><text v-for="(s, i) in spots" :key="i" :x="s[0]" :y="s[1]">{{ s[2] }}</text></g>
        <g class="street">
          <text transform="translate(102 130) rotate(-90)">do</text>
          <text transform="translate(96 470) rotate(-90)">Nova</text>
          <text transform="translate(90 738) rotate(-90)">Rua</text>
          <text class="dark" transform="translate(38 1134) rotate(92)">R Nova do Loureiro</text>
          <text class="dark" transform="translate(596 702) rotate(18)">Cc do Cabra Coronel das Bolas</text>
        </g>
      </svg>

      <Icon n="handCursor" class="pointer" />
      <div class="mdi">
        <button type="button"><Icon n="mdiMin" /></button>
        <button type="button"><Icon n="mdiRestore" /></button>
        <button type="button"><Icon n="mdiClose" /></button>
      </div>
      <aside class="navbar">
        <button type="button" class="end"><Icon n="navX" /></button>
        <button type="button" class="wheel"><Icon n="navWheel" /><b>2D</b></button>
        <button type="button"><Icon n="navHand" /></button>
        <button type="button"><Icon n="navZoom" /></button>
        <button type="button"><Icon n="caret" class="dim" /></button>
        <button type="button" class="end"><Icon n="navM" /></button>
      </aside>
      <div class="command">
        <div class="handle">
          <Icon n="grip" />
          <button type="button"><Icon n="closeW" /></button>
          <button type="button"><Icon n="wrench" /></button>
        </div>
        <div class="console">
          <div class="history"><p>Command:</p><p>Press ESC or ENTER to exit, or right-click to display shortcut menu.</p></div>
          <label class="prompt"><Icon n="hand" /><Icon n="down" /><input v-model="command" type="text" aria-label="Command line" /><Icon n="up" /></label>
        </div>
      </div>
    </main>

    <footer class="bottom">
      <nav class="sheets layouts">
        <Icon n="slash" />
        <button type="button">Model</button>
        <Icon n="slash" />
        <button type="button">escala_1-1000</button>
        <span class="active"><button type="button">escala_1-100</button></span>
        <button type="button" class="add" aria-label="New layout"><Icon n="plus" /></button>
        <Icon n="slash" />
      </nav>
      <div class="status">
        <div class="set"><button type="button" class="paper">PAPER</button></div>
        <div class="set">
          <button type="button"><Icon n="ortho" /></button>
          <button type="button" class="lit"><Icon n="polar" /></button>
          <button type="button" class="more"><Icon n="caretBig" /></button>
          <button type="button"><Icon n="iso" /></button>
          <button type="button" class="more"><Icon n="caretBig" /></button>
          <button type="button" class="split"><Icon n="track" /></button>
          <button type="button" class="lit"><Icon n="osnap" /></button>
          <button type="button" class="more"><Icon n="caretBig" /></button>
        </div>
        <div class="set">
          <button type="button"><Icon n="annoFrame" /></button>
          <button type="button"><Icon n="anno1" /></button>
          <button type="button"><Icon n="anno2" /></button>
        </div>
        <div class="set">
          <button type="button"><Icon n="gear" /></button>
          <button type="button" class="more"><Icon n="caretBig" /></button>
          <button type="button" class="split"><Icon n="plus" /></button>
        </div>
        <div class="set"><button type="button"><Icon n="isolate" /></button></div>
        <div class="set"><button type="button" class="wide"><Icon n="acad" /></button></div>
        <div class="set">
          <button type="button"><Icon n="screen" /></button>
          <button type="button"><Icon n="menu" /></button>
        </div>
      </div>
    </footer>
  </div>
</template>

<style>
body {
  margin: 0;
  background: #222933;
}
</style>

<style scoped>
.app {
  display: flex;
  flex-direction: column;
  min-height: 100vh;
  font: 14px/20px "Open Sans", "Noto Sans", sans-serif;
  color: #f0f0f0;
  background: #222933;
  overflow: hidden;
}
button {
  display: flex;
  align-items: center;
  flex: none;
  padding: 0;
  border: 0;
  background: none;
  color: inherit;
  font: inherit;
  white-space: nowrap;
}
svg {
  display: block;
  flex: none;
}
input,
select {
  min-width: 0;
  padding: 0;
  border: 0;
  outline: 0;
  background: none;
  color: inherit;
  font: inherit;
}
select {
  appearance: none;
  flex: 1;
}

/* title bar */
.titlebar {
  display: flex;
  height: 34px;
}
.quick,
.account,
.window {
  display: flex;
  align-items: center;
  height: 26px;
}
.quick {
  gap: 10px;
}
.quick .narrow {
  width: 5px;
}
.brand {
  position: relative;
}
.brand b {
  position: absolute;
  color: #fff;
}
.brand-a {
  left: 8px;
  top: 2px;
  font-size: 16px;
}
.brand-cad {
  left: 26px;
  top: 3px;
  font-size: 10px;
}
.share {
  gap: 6px;
  color: #8fcbf8;
}
.title {
  flex: 1;
  display: flex;
  justify-content: center;
  gap: 18px;
  margin: 0;
  font: inherit;
  line-height: 29px;
  white-space: nowrap;
}
.account {
  gap: 8px;
}
.keyword {
  width: 213px;
  height: 26px;
  padding-left: 4px;
  padding-right: 6px;
  background: #474f61;
  font-size: 13px;
  font-style: italic;
}
.keyword::placeholder {
  color: #b9bdc4;
  opacity: 1;
}
.user {
  gap: 6px;
}
.user span {
  width: 100px;
}
.cart {
  margin-left: 4px;
}
.drop {
  gap: 8px;
  margin: 0 3px;
}
.rule {
  width: 1px;
  height: 22px;
  background: #4d576b;
}
.window {
  gap: 17px;
  margin-left: 86px;
  padding-right: 6px;
}

/* ribbon tabs */
.tabs {
  display: flex;
  height: 25px;
  padding-left: 3px;
  color: #b5b8bc;
}
.tabs button {
  padding: 0 12px;
}
.tabs .home {
  background: #3b4453;
  color: #f0f0f0;
}
.tabs .layout {
  margin-left: 4px;
  background: #126696;
  border: 1px solid #0d8fd6;
  color: #f0f0f0;
}
.tabs .collapse {
  gap: 4px;
  padding-left: 27px;
}
.chip {
  display: flex;
  justify-content: center;
  align-items: center;
  width: 19px;
  height: 9px;
  background: #f4f4f4;
}
.chip svg {
  width: 6px;
  height: 4px;
}

/* ribbon */
.ribbon {
  display: grid;
  grid-template-columns: 278px 316px 184px 341px 100px 277px 85px 121px 113px 1fr;
  height: 124px;
  background: #3b4453;
}
.panel {
  display: flex;
  flex-direction: column;
  justify-content: space-between;
  box-sizing: border-box;
  border-right: 1px solid #262e39;
}
.panel.last {
  border-right: 0;
}
.tools {
  display: flex;
  height: 94px;
  padding-top: 4px;
}
.panel footer {
  display: flex;
  justify-content: center;
  align-items: center;
  gap: 8px;
  height: 22px;
}
.panel .launched {
  justify-content: space-between;
  padding-right: 7px;
}
.launched span {
  display: flex;
  align-items: center;
  gap: 8px;
}
.panel .view {
  justify-content: flex-start;
  padding-left: 6px;
}
.view svg:last-child {
  margin-left: 3px;
}
.big {
  flex-direction: column;
  height: 93px;
  padding-top: 4px;
}
.big span {
  margin: 5px 0 4px;
  text-align: center;
}
.w44 { width: 44px; }
.w52 { width: 52px; }
.w54 { width: 54px; }
.w60 { width: 60px; }
.w66 { width: 66px; }
.w70 { width: 70px; }
.w76 { width: 76px; }
.w80 { width: 80px; }
.w88 { width: 88px; }
.col {
  display: flex;
  flex-direction: column;
  margin-left: 8px;
}
.small {
  gap: 9px;
  height: 31px;
}
.modify {
  display: grid;
  grid-template-columns: 91px 88px 95px 1fr;
}
.modify .col {
  margin-left: 7px;
}
.modify .small {
  gap: 6px;
}
.modify .small span + svg {
  margin-left: 6px;
}
.col.close {
  margin-left: 3px;
}
.tight {
  margin-left: 0;
}
.tight .small {
  justify-content: center;
  width: 27px;
}
.tight .on {
  height: 25px;
  margin-top: 2px;
  border: 1px solid #6fbcf5;
  background: #465a74;
}
.combo {
  display: flex;
  align-items: center;
  box-sizing: border-box;
  height: 28px;
  padding: 0 2px 0 7px;
  border: 1px solid #2a323e;
  background: #4e5a6e;
}
.layers .combo {
  gap: 4px;
  width: 260px;
}
.layers {
  padding-top: 2px;
}
.swatch {
  box-sizing: border-box;
  width: 20px;
  height: 20px;
  margin-right: 6px;
  border: 1px solid #dadada;
  background: #ff8000;
}
.layers .swatch {
  width: 18px;
  height: 18px;
  margin-left: 4px;
  margin-right: 1px;
}
.sample {
  width: 80px;
  height: 1px;
  margin-right: 3px;
  background: #f4f4f4;
}
.grid {
  display: grid;
  grid-template-columns: repeat(5, 30px);
  grid-auto-rows: 31px;
  padding-left: 4px;
}
.props {
  display: grid;
  grid-template-columns: 20px 171px;
  grid-template-rows: repeat(3, 31px);
  align-items: center;
  column-gap: 3px;
  margin-left: 3px;
}

/* file and layout tabs */
.sheets {
  display: flex;
  align-items: center;
  padding-left: 11px;
}
.sheets .active {
  display: flex;
  align-items: center;
  align-self: stretch;
  background: #3b4453;
  color: #fff;
  font-weight: 700;
}
.files {
  box-sizing: border-box;
  height: 38px;
  padding-top: 3px;
  border-bottom: 5px solid #3b4453;
}
.files > button:first-of-type {
  margin: 0 9px;
}
.files .active {
  gap: 9px;
  padding: 0 15px 0 21px;
  clip-path: polygon(12px 0, 100% 0, calc(100% - 12px) 100%, 0 100%);
}
.files .add {
  margin: 0 14px 0 10px;
}

/* drawing area */
.canvas {
  position: relative;
  flex: 1;
  display: flex;
  justify-content: center;
  align-items: flex-start;
  padding: 118px 11px 0 0;
  min-height: 520px;
  background: #8a8a8a;
}
.plan {
  box-sizing: content-box;
  border: 1px solid #dd8530;
  background: #fff;
  box-shadow: 1px 1px 0 2px #7b7b7b;
}
.spot {
  fill: #ad7a48;
  font: 23px "Liberation Sans", sans-serif;
  stroke: #ad7a48;
}
.street {
  fill: #222;
  stroke: #222;
  font: 26px "Liberation Sans", sans-serif;
}
.street .dark {
  fill: #111;
  font-size: 20px;
  font-weight: 700;
}
.pointer {
  position: absolute;
  left: 531px;
  top: 379px;
  overflow: visible;
}
.mdi {
  position: absolute;
  top: 10px;
  right: 9px;
  display: flex;
  gap: 9px;
}
.navbar {
  position: absolute;
  right: 1px;
  top: 288px;
  display: flex;
  flex-direction: column;
  align-items: center;
  justify-content: space-between;
  box-sizing: border-box;
  width: 43px;
  height: 164px;
  padding: 2px 3px 4px;
  border: 2px solid #707070;
  border-radius: 5px;
  background: #9c9c9c;
}
.navbar .end {
  align-self: flex-end;
}
.wheel {
  position: relative;
  padding: 6px 0 4px;
  border-top: 1px solid #8a8a8a;
  border-bottom: 1px solid #8a8a8a;
}
.wheel b {
  position: absolute;
  right: 0;
  bottom: 0;
  color: #6c829b;
  font-size: 11px;
}
.dim {
  opacity: 0.3;
  filter: brightness(0);
}
.command {
  position: absolute;
  z-index: 1;
  left: 340px;
  right: 434px;
  bottom: -4px;
  display: flex;
  height: 72px;
  box-sizing: border-box;
  border-radius: 4px;
  background: #2b323e;
  font: 15px/20px "Liberation Mono", monospace;
  color: #000;
}
.handle {
  display: flex;
  flex-direction: column;
  align-items: center;
  justify-content: space-between;
  width: 31px;
  padding: 6px 4px 4px 0;
  box-sizing: border-box;
}
.console {
  flex: 1;
  display: flex;
  flex-direction: column;
  padding: 1px 1px 1px 0;
}
.history {
  flex: 1;
  padding: 6px 3px 0;
  background: #c8c8c8;
}
.history p {
  margin: 0;
}
.prompt {
  display: flex;
  align-items: center;
  gap: 2px;
  height: 24px;
  margin-top: 1px;
  padding: 1px 6px 0 5px;
  background: #fff;
}
.prompt input {
  flex: 1;
  margin-left: 5px;
  font-weight: 700;
}

/* bottom bar */
.bottom {
  display: flex;
  justify-content: space-between;
  height: 29px;
  border-top: 5px solid #3b4453;
}
.layouts > button {
  margin: 0 11px;
  padding-top: 2px;
}
.layouts .active {
  padding: 2px 22px 0 21px;
  clip-path: polygon(12px 0, 100% 0, calc(100% - 12px) 100%, 0 100%);
}
.layouts .add {
  margin: 0 14px 0 12px;
}
.status {
  display: flex;
  gap: 3px;
  padding-top: 2px;
}
.set {
  display: flex;
  background: #3b4453;
}
.status button {
  justify-content: center;
  width: 30px;
  padding-top: 2px;
}
.status .paper {
  width: 52px;
}
.status .lit {
  width: 28px;
  background: #5f8fc4;
}
.status .more {
  width: 22px;
}
.status .wide {
  width: 34px;
}
.status .split {
  border-left: 1px solid #262e39;
}
</style>
